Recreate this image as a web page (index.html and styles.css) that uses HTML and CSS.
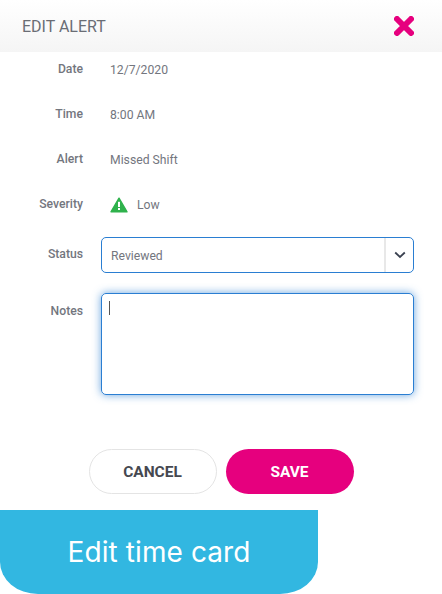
FILE: index.html
```html
<!DOCTYPE html>
<html lang="en">
<head>
  <meta charset="UTF-8">
  <meta name="viewport" content="width=device-width, initial-scale=1">
  <title>Edit Alert</title>
  <link rel="stylesheet" href="styles.css">
</head>
<body>
  <div class="header">
    <span class="title">EDIT ALERT</span>
    <svg class="close" width="20" height="20" viewBox="0 0 20 20"><path d="M3 3 L17 17 M17 3 L3 17" stroke="#e6007e" stroke-width="6" stroke-linecap="round"/></svg>
  </div>

  <div class="form">
    <div class="row"><span class="label">Date</span><span class="value">12/7/2020</span></div>
    <div class="row"><span class="label">Time</span><span class="value">8:00 AM</span></div>
    <div class="row"><span class="label">Alert</span><span class="value">Missed Shift</span></div>
    <div class="row">
      <span class="label">Severity</span>
      <span class="value severity">
        <svg width="18" height="16" viewBox="0 0 18 16"><path d="M9 1.2 L17 14.8 H1 Z" fill="#2fb24c" stroke="#2fb24c" stroke-width="1.4" stroke-linejoin="round"/><rect x="8" y="4.8" width="2" height="5.2" fill="#fff"/><rect x="8" y="11" width="2" height="2" fill="#fff"/></svg>
        Low
      </span>
    </div>
    <div class="row status-row">
      <span class="label">Status</span>
      <div class="select">
        <span class="select-text">Reviewed</span>
        <span class="select-arrow"><svg width="12" height="8" viewBox="0 0 12 8"><path d="M1.2 1.5 L6 6 L10.8 1.5" fill="none" stroke="#3a4150" stroke-width="1.8"/></svg></span>
      </div>
    </div>
    <div class="row notes-row">
      <span class="label">Notes</span>
      <div class="notes"><span class="caret"></span></div>
    </div>
  </div>

  <div class="buttons">
    <button class="btn cancel">CANCEL</button>
    <button class="btn save">SAVE</button>
  </div>

  <div class="banner">Edit time card</div>
</body>
</html>
```

FILE: styles.css
```css
body {
  margin: 0;
  height: 594px;
  overflow: hidden;
  background-color: #fff;
  font-family: Roboto, Arial, sans-serif;
  color: #73767e;
}
.header {
  height: 52px;
  display: flex;
  justify-content: space-between;
  align-items: center;
  padding: 0 28px 0 22px;
  background: linear-gradient(#fff, #f5f5f5);
}
.title {
  font-size: 16px;
  color: #6a6d75;
}
.close {
  display: block;
}
.form {
  padding-top: 6px;
}
.row {
  display: flex;
  align-items: center;
  height: 22px;
  margin-bottom: 23px;
  font-size: 12.2px;
}
.label {
  width: 83px;
  text-align: right;
  font-weight: 500;
}
.value {
  margin-left: 27px;
  padding-top: 2px;
}
.severity {
  display: flex;
  align-items: center;
  gap: 9px;
}
.status-row {
  height: 36px;
  margin-top: -1px;
  margin-bottom: 20px;
}
.status-row .label {
  padding-bottom: 2px;
}
.select {
  margin-left: 18px;
  width: 313px;
  height: 36px;
  box-sizing: border-box;
  display: flex;
  align-items: center;
  border: 1.5px solid #2a7ed2;
  border-radius: 5px;
}
.select-text {
  flex: 1;
  padding: 1px 0 0 9px;
}
.select-arrow {
  width: 27px;
  height: 100%;
  display: flex;
  align-items: center;
  justify-content: center;
  border-left: 2px solid #e8e8e8;
}
.notes-row {
  height: 102px;
  align-items: flex-start;
  margin-bottom: 0;
}
.notes-row .label {
  padding-top: 11px;
}
.notes {
  margin-left: 18px;
  width: 313px;
  height: 102px;
  box-sizing: border-box;
  padding: 7px;
  border: 1.5px solid #2a7ed2;
  border-radius: 5px;
  box-shadow: 0 0 8px rgba(42, 126, 210, 0.7);
}
.caret {
  display: block;
  width: 1px;
  height: 14px;
  background-color: #555;
}
.buttons {
  display: flex;
  justify-content: center;
  gap: 9px;
  margin-top: 54px;
}
.btn {
  width: 128px;
  height: 45px;
  border-radius: 23px;
  font-family: Roboto, Arial, sans-serif;
  font-size: 15.5px;
  font-weight: 700;
}
.cancel {
  background-color: #fff;
  border: 1px solid #e4e4e4;
  color: #454850;
}
.save {
  background-color: #e6007e;
  border: none;
  color: #fff;
}
.banner {
  width: 318px;
  height: 84px;
  margin-top: 16px;
  display: flex;
  align-items: center;
  justify-content: center;
  background-color: #32b7e1;
  border-radius: 0 0 38px 38px / 0 0 32px 32px;
  color: #fff;
  font-family: Inter, Arial, sans-serif;
  font-size: 28px;
  letter-spacing: 0.1px;
}
```
